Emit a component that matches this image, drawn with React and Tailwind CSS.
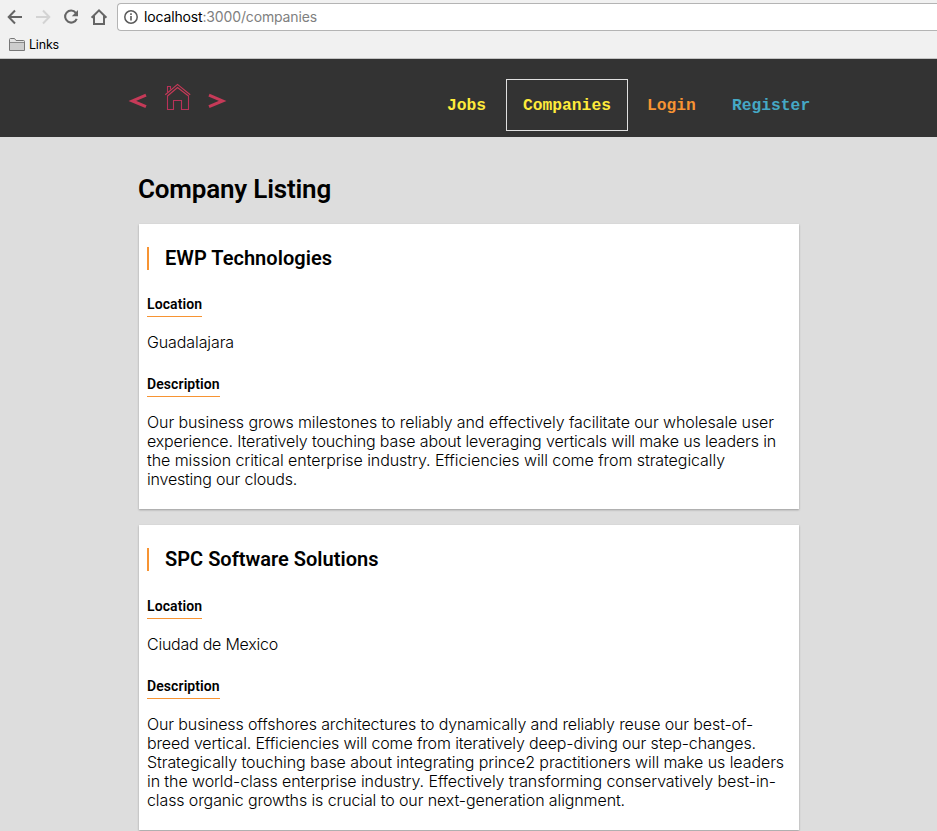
const companies = [
  {
    name: 'EWP Technologies',
    nameTracking: 'tracking-[0.03px]',
    gap: 'mt-[26px]',
    location: 'Guadalajara',
    locationTracking: 'tracking-[-0.1px]',
    lines: [
      ['Our business grows milestones to reliably and effectively facilitate our wholesale user', 'tracking-[-0.091px]'],
      ['experience. Iteratively touching base about leveraging verticals will make us leaders in', 'tracking-[-0.143px]'],
      ['the mission critical enterprise industry. Efficiencies will come from strategically', 'tracking-[-0.069px]'],
      ['investing our clouds.', 'tracking-[-0.2px]'],
    ],
  },
  {
    name: 'SPC Software Solutions',
    nameTracking: 'tracking-[0.01px]',
    gap: 'mt-[27px]',
    location: 'Ciudad de Mexico',
    locationTracking: 'tracking-[-0.234px]',
    lines: [
      ['Our business offshores architectures to dynamically and reliably reuse our best-of-', 'tracking-[-0.12px]'],
      ['breed vertical. Efficiencies will come from iteratively deep-diving our step-changes.', 'tracking-[-0.146px]'],
      ['Strategically touching base about integrating prince2 practitioners will make us leaders', 'tracking-[-0.076px]'],
      ['in the world-class enterprise industry. Effectively transforming conservatively best-in-', 'tracking-[-0.092px]'],
      ['class organic growths is crucial to our next-generation alignment.', 'tracking-[-0.105px]'],
    ],
  },
]

function BrowserBar() {
  return (
    <div className="h-[59px] bg-[#f1f1f1] border-b border-[#c4c4c4] font-[Inter,sans-serif] overflow-hidden">
      <div className="flex h-[34px] items-center">
        <svg width="117" height="34" viewBox="0 0 117 34" fill="none" className="shrink-0">
          <path d="M22 17H9.5M15 10.5L8.7 17L15 23.5" stroke="#656565" strokeWidth="2" />
          <path d="M36 17H48.5M43 10.5L49.3 17L43 23.5" stroke="#d3d3d3" strokeWidth="2" />
          <path d="M75.8 12.8A6 6 0 1 0 76.7 18.8" stroke="#656565" strokeWidth="2.1" />
          <path d="M78 10V16.2H71.8Z" fill="#656565" />
          <path d="M91.6 17.8L99 10.3L106.4 17.8M94 16V24H104V16" stroke="#656565" strokeWidth="2" />
        </svg>
        <div className="flex h-7 flex-1 items-center rounded-l-[4px] border border-r-0 border-[#b4b4b4] bg-white pl-[6px]">
          <svg width="14" height="14" viewBox="0 0 14 14" fill="none" className="shrink-0">
            <circle cx="7" cy="7" r="6.2" stroke="#5a5a5a" strokeWidth="1.5" />
            <path d="M7 6V10.6M7 3.3V4.9" stroke="#5a5a5a" strokeWidth="1.6" />
          </svg>
          <span className="ml-[6px] whitespace-nowrap text-[14px] leading-5 tracking-[-0.15px] text-black">
            localhost<span className="text-[#808080]">:3000/companies</span>
          </span>
        </div>
      </div>
      <div className="flex h-[22px] items-center pl-[9px]">
        <svg width="16" height="13" viewBox="0 0 16 13" fill="none" className="-mt-px">
          <path d="M.5 12.5V1.5Q.5 .5 1.5 .5H5.5L7 2.5H14.5Q15.5 2.5 15.5 3.5V12.5Z" fill="#e4e4e4" stroke="#777" />
          <path d="M1 5H15V12H1Z" fill="#cdcdcd" />
          <path d="M1 4.5H15" stroke="#8a8a8a" />
        </svg>
        <span className="ml-1 text-[12.5px] leading-4 tracking-[-0.2px] text-black">Links</span>
      </div>
    </div>
  )
}

function Header() {
  return (
    <header className="flex h-[78px] bg-[#333]">
      <svg width="110" height="78" viewBox="120 59 110 78" fill="none" className="ml-[120px] shrink-0">
        <path d="M146 95.2L132.4 100.9L146 106.6" stroke="#c63a58" strokeWidth="3" />
        <path d="M209 95.2L222.6 100.9L209 106.6" stroke="#c63a58" strokeWidth="3" />
        <path d="M165.3 94.8L177.5 84.4L190.2 94.8M167.5 96L177.5 87.6L188.5 96" stroke="#c63a58" strokeWidth="1.15" />
        <path d="M167.5 95.5V109.5H173.5V100.5H181.5V109.5H188.5V95.5M167.5 92.3V86.5H170.5V89.5" stroke="#b83259" strokeWidth="1.1" />
      </svg>
      <nav className="ml-[201px] mt-[20px] flex h-[52px] font-['Liberation_Mono',monospace] text-[16.3px] font-bold leading-[50px]">
        <a className="w-[75px] pl-4 pt-0.5 text-[#ffeb3b]">Jobs</a>
        <a className="w-[122px] border border-[#e0e0e0] pl-4 pt-px text-[#ffeb3b]">Companies</a>
        <a className="ml-[3px] w-[84px] pl-4 pt-0.5 text-[#f79433]">Login</a>
        <a className="pl-[17px] pt-0.5 text-[#45a8c5]">Register</a>
      </nav>
    </header>
  )
}

function Label({ children, className }) {
  return (
    <div className={`flex ${className}`}>
      <h3 className="h-[21px] border-b border-[#f79433] font-[Roboto,sans-serif] text-[14px] font-semibold leading-4 tracking-[0.09px]">
        {children}
      </h3>
    </div>
  )
}

function Company({ company }) {
  return (
    <article className="mb-4 bg-white px-2 pb-5 pt-[23px] shadow-[0_1px_2px_rgba(0,0,0,0.3)]">
      <h2 className="h-[23px] border-l-2 border-[#f79433] pl-4 font-[Roboto,sans-serif] text-[20px] font-semibold leading-[23px]">
        <span className={company.nameTracking}>{company.name}</span>
      </h2>
      <Label className={company.gap}>Location</Label>
      <p className={`mt-4 leading-[19px] ${company.locationTracking}`}>{company.location}</p>
      <Label className="mt-6">Description</Label>
      <p className="mt-4 whitespace-nowrap leading-[19px]">
        {company.lines.map(([text, tracking]) => (
          <span key={text} className={`block ${tracking}`}>{text}</span>
        ))}
      </p>
    </article>
  )
}

export default function App() {
  return (
    <div className="h-[831px] overflow-hidden bg-[#ddd] text-black">
      <BrowserBar />
      <Header />
      <main className="ml-[139px] w-[660px] font-[Inter,sans-serif] text-[16px] font-light">
        <h1 className="-ml-px mb-[19px] pt-[37px] font-[Roboto,sans-serif] text-[26px] font-semibold leading-[31px] tracking-[-0.18px]">
          Company Listing
        </h1>
        {companies.map((c) => <Company key={c.name} company={c} />)}
      </main>
    </div>
  )
}
